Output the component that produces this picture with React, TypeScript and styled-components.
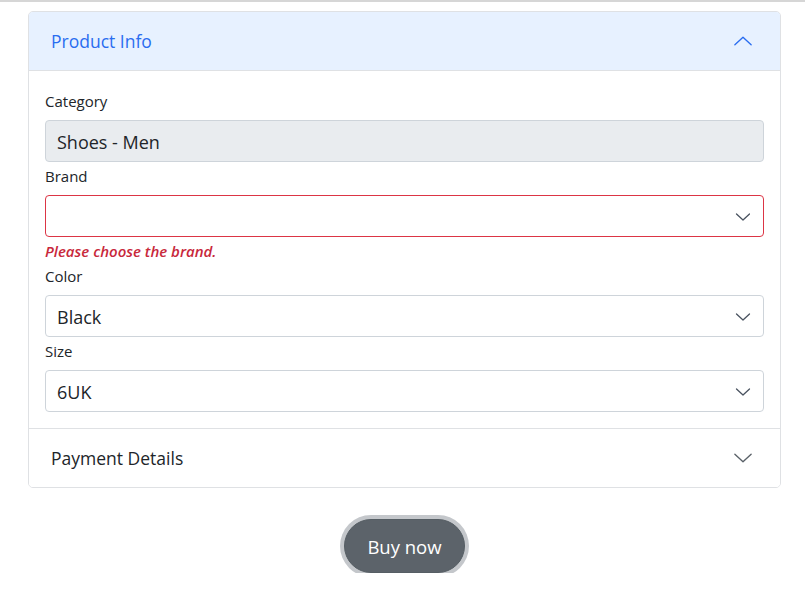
import React, { useState } from "react";
import styled, { createGlobalStyle } from "styled-components";

const Global = createGlobalStyle`
  html, body { margin: 0; padding: 0; background: #fff; }
  body {
    font-family: "Open Sans", "Noto Sans", "Liberation Sans", sans-serif;
    color: #212529;
    border-top: 2px solid #d6d6d6;
  }
`;

const Page = styled.div`
  padding: 9px 24px 0 28px;
  display: flex;
  flex-direction: column;
  align-items: stretch;
`;

const Accordion = styled.div`
  border: 1px solid #dfe1e4;
  border-radius: 5px;
  overflow: hidden;
`;

const HeaderButton = styled.button<{ $open: boolean }>`
  display: flex;
  align-items: center;
  justify-content: space-between;
  width: 100%;
  box-sizing: border-box;
  height: ${(p) => (p.$open ? "59px" : "58px")};
  padding: 0 27px 0 22px;
  border: none;
  border-bottom: ${(p) => (p.$open ? "1px solid #dfe1e4" : "none")};
  background: ${(p) => (p.$open ? "#e7f1ff" : "#fff")};
  color: ${(p) => (p.$open ? "#2a6df0" : "#212529")};
  font-family: inherit;
  font-size: 17.5px;
  letter-spacing: 0;
  text-align: left;
  cursor: pointer;
`;

const Section = styled.div<{ $last?: boolean }>`
  border-bottom: ${(p) => (p.$last ? "none" : "1px solid #dfe1e4")};
`;

const Body = styled.div`
  padding: 16px;
  display: flex;
  flex-direction: column;
`;

const Label = styled.label`
  display: block;
  font-size: 15px;
  line-height: 25px;
  padding-top: 2px;
  margin-bottom: 6px;
  color: #212529;
`;

const Field = styled.div<{ $disabled?: boolean; $invalid?: boolean }>`
  box-sizing: border-box;
  height: 42px;
  border: 1px solid ${(p) => (p.$invalid ? "#dc3545" : "#ced4da")};
  border-radius: 4px;
  background: ${(p) => (p.$disabled ? "#e9ecef" : "#fff")};
  display: flex;
  align-items: center;
  justify-content: space-between;
  padding: 1px 12px 0 11px;
  font-size: 18px;
  color: #212529;
`;

const Feedback = styled.div`
  margin-top: 4px;
  height: 21px;
  line-height: 20px;
  font-size: 15px;
  font-weight: 600;
  font-style: italic;
  color: #c8283b;
`;

const Footer = styled.div`
  display: flex;
  justify-content: center;
  padding-top: 31px;
`;

const BuyButton = styled.button`
  box-sizing: border-box;
  height: 54px;
  padding: 0 22px;
  border-radius: 27px;
  border: 1px solid #565e64;
  background: #5c636a;
  color: #fff;
  font-family: inherit;
  font-size: 18.5px;
  box-shadow: 0 0 0 4px #c4c7cb;
  cursor: pointer;
`;

const Chevron = ({ up, color, size = 20, width = 1.2 }: { up?: boolean; color: string; size?: number; width?: number }) => (
  <svg width={size} height={size} viewBox="0 0 16 16" fill="none">
    <path
      d={up ? "M1.5 11l6.5-6 6.5 6" : "M1.5 5l6.5 6 6.5-6"}
      stroke={color}
      strokeWidth={width}
      strokeLinecap="round"
      strokeLinejoin="round"
    />
  </svg>
);

const SelectField = ({ value, invalid }: { value: string; invalid?: boolean }) => (
  <Field $invalid={invalid}>
    <span>{value}</span>
    <Chevron color="#4a5360" size={16} width={1.3} />
  </Field>
);

export default function App() {
  const [open, setOpen] = useState(true);
  return (
    <Page>
      <Global />
      <Accordion>
        <Section>
          <HeaderButton $open={open} onClick={() => setOpen(!open)}>
            <span>Product Info</span>
            <Chevron up={open} color={open ? "#2a6df0" : "#212529"} width={1.1} />
          </HeaderButton>
          {open && (
            <Body>
              <Label>Category</Label>
              <Field $disabled>
                <span>Shoes - Men</span>
              </Field>
              <Label>Brand</Label>
              <SelectField value="" invalid />
              <Feedback>Please choose the brand.</Feedback>
              <Label>Color</Label>
              <SelectField value="Black" />
              <Label>Size</Label>
              <SelectField value="6UK" />
            </Body>
          )}
        </Section>
        <Section $last>
          <HeaderButton $open={false}>
            <span>Payment Details</span>
            <Chevron color="#5a6168" width={1.1} />
          </HeaderButton>
        </Section>
      </Accordion>
      <Footer>
        <BuyButton>Buy now</BuyButton>
      </Footer>
    </Page>
  );
}
